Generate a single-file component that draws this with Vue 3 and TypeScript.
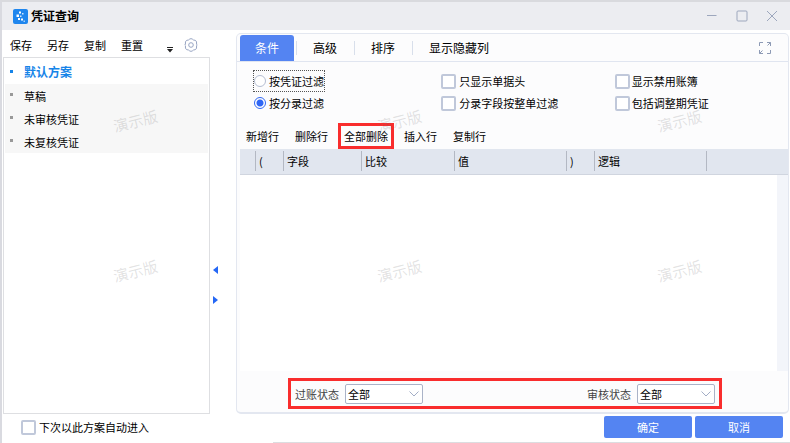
<script setup lang="ts">
import { ref } from 'vue'

interface Check {
  id: string
  label: string
}

const tools: string[] = ['保存', '另存', '复制', '重置']
const schemes: string[] = ['默认方案', '草稿', '未审核凭证', '未复核凭证']
const tabs: string[] = ['条件', '高级', '排序', '显示隐藏列']
const actions: string[] = ['新增行', '删除行', '全部删除', '插入行', '复制行']
const columns: string[] = ['', '(', '字段', '比较', '值', ')', '逻辑', '']
const modes: Check[] = [
  { id: 'voucher', label: '按凭证过滤' },
  { id: 'entry', label: '按分录过滤' },
]
const leftChecks: Check[] = [
  { id: 'headOnly', label: '只显示单据头' },
  { id: 'wholeDoc', label: '分录字段按整单过滤' },
]
const rightChecks: Check[] = [
  { id: 'disabledBook', label: '显示禁用账簿' },
  { id: 'adjustPeriod', label: '包括调整期凭证' },
]

const activeScheme = ref(0)
const activeTab = ref(0)
const mode = ref('entry')
const checked = ref<string[]>([])
const autoEnter = ref(false)
const postState = ref('全部')
const auditState = ref('全部')
</script>

<template>
  <div class="window">
    <header class="titlebar">
      <svg class="logo" viewBox="0 0 15 15" aria-hidden="true">
        <rect width="15" height="15" rx="2" fill="#1f86ee" />
        <g fill="#fff">
          <rect x="6" y="2.500" width="2" height="2" />
          <rect x="9" y="4" width="1.500" height="1.500" opacity=".8" />
          <rect x="3.500" y="5.500" width="2.500" height="2.500" />
          <rect x="7" y="6.500" width="1.500" height="1.500" opacity=".8" />
          <rect x="5" y="9" width="2" height="2" />
          <rect x="8" y="9.500" width="2" height="2" />
          <rect x="10.500" y="11.500" width="1.500" height="1.500" opacity=".6" />
        </g>
      </svg>
      <h1>凭证查询</h1>
      <div class="controls">
        <button type="button" aria-label="最小化">
          <svg viewBox="0 0 12 12"><path d="M1 5.500h9.500" /></svg>
        </button>
        <button type="button" aria-label="最大化">
          <svg viewBox="0 0 12 12"><rect x="1" y="1" width="10" height="10" rx="1" /></svg>
        </button>
        <button type="button" aria-label="关闭">
          <svg viewBox="0 0 12 12"><path d="M1 1l10 10M11 1L1 11" /></svg>
        </button>
      </div>
    </header>

    <main class="content">
      <aside class="side">
        <div class="toolbar">
          <button v-for="t in tools" :key="t" type="button">{{ t }}</button>
          <button type="button" class="more" aria-label="更多">
            <svg viewBox="0 0 6 6"><path d="M0 0h6v1H0zM0 2h6L3 5.500z" fill="#222" /></svg>
          </button>
          <button type="button" class="gear" aria-label="设置">
            <svg viewBox="0 0 14 14" fill="none" stroke="#98a5c3">
              <path d="M5.300 1.300Q7-.1 8.700 1.300L9.500 2 11.100 2.300Q12.900 3 12.600 5L12.500 6.200 13.300 7 12.500 7.800 12.600 9Q12.900 11 11.100 11.700L9.500 12 8.700 12.700Q7 14.100 5.300 12.700L4.500 12 2.900 11.700Q1.100 11 1.400 9L1.500 7.800 .7 7 1.500 6.200 1.400 5Q1.100 3 2.900 2.300L4.500 2z" />
              <circle cx="7" cy="7" r="2.300" />
            </svg>
          </button>
        </div>
        <ul class="schemes">
          <li v-for="(s, i) in schemes" :key="s">
            <button type="button" :class="{ active: i === activeScheme }" @click="activeScheme = i">{{ s }}</button>
          </li>
        </ul>
      </aside>

      <div class="splitter">
        <button type="button" aria-label="收起"><svg viewBox="0 0 5 8"><path d="M5 0v8L0 4z" /></svg></button>
        <button type="button" aria-label="展开"><svg viewBox="0 0 5 8"><path d="M0 0v8l5-4z" /></svg></button>
      </div>

      <section class="panel">
        <nav class="tabs">
          <button
            v-for="(t, i) in tabs"
            :key="t"
            type="button"
            :class="{ active: i === activeTab }"
            @click="activeTab = i"
          >
            {{ t }}
          </button>
          <button type="button" class="expand" aria-label="全屏">
            <svg viewBox="0 0 12 12" fill="none" stroke="#8d9ab5">
              <path d="M.5 4V.5H4M8 .5h3.500V4M11.500 8v3.500H8M4 11.500H.5V8M8.500 3.500l3-3M.5 11.500l3-3" />
            </svg>
          </button>
        </nav>

        <div class="options">
          <div class="group">
            <label v-for="m in modes" :key="m.id" :class="{ focused: m.id === 'voucher' }">
              <input v-model="mode" type="radio" name="mode" :value="m.id" />{{ m.label }}
            </label>
          </div>
          <div class="group">
            <label v-for="c in leftChecks" :key="c.id">
              <input v-model="checked" type="checkbox" :value="c.id" />{{ c.label }}
            </label>
          </div>
          <div class="group">
            <label v-for="c in rightChecks" :key="c.id">
              <input v-model="checked" type="checkbox" :value="c.id" />{{ c.label }}
            </label>
          </div>
        </div>

        <div class="actions">
          <button v-for="a in actions" :key="a" type="button" :class="{ marked: a === '全部删除' }">{{ a }}</button>
        </div>

        <div class="grid">
          <table>
            <colgroup>
              <col class="c-tick" /><col class="c-paren" /><col class="c-field" /><col class="c-compare" />
              <col class="c-value" /><col class="c-paren" /><col class="c-value" /><col />
            </colgroup>
            <thead>
              <tr>
                <th v-for="(c, i) in columns" :key="i" scope="col"><span>{{ c }}</span></th>
              </tr>
            </thead>
          </table>
          <div class="track"></div>
        </div>

        <div class="states">
          <div class="frame">
            <div class="field">
              <label for="post">过账状态</label>
              <div class="select">
                <select id="post" v-model="postState"><option>全部</option></select>
                <svg viewBox="0 0 10 6"><path d="M.5.5L5 5 9.500.5" /></svg>
              </div>
            </div>
            <div class="field">
              <label for="audit">审核状态</label>
              <div class="select">
                <select id="audit" v-model="auditState"><option>全部</option></select>
                <svg viewBox="0 0 10 6"><path d="M.5.5L5 5 9.500.5" /></svg>
              </div>
            </div>
          </div>
        </div>
      </section>
    </main>

    <footer class="footer">
      <label><input v-model="autoEnter" type="checkbox" />下次以此方案自动进入</label>
      <div class="buttons">
        <button type="button">确定</button>
        <button type="button">取消</button>
      </div>
    </footer>

    <div class="watermarks" aria-hidden="true">
      <span v-for="n in 6" :key="n">演示版</span>
    </div>
  </div>
</template>

<style>
body {
  margin: 0;
  background: #fff;
}
</style>

<style scoped>
* {
  box-sizing: border-box;
}
.window {
  position: relative;
  display: flex;
  flex-direction: column;
  min-height: 100vh;
  border-top: 2px solid #d9dade;
  border-left: 2px solid #d9dae0;
  font: 11px/16px "Noto Sans CJK SC", sans-serif;
  color: #000;
}
button {
  padding: 0;
  border: 0;
  background: none;
  font: inherit;
  color: inherit;
  white-space: nowrap;
}
svg {
  display: block;
}
input {
  appearance: none;
  flex: none;
  width: 15px;
  height: 15px;
  margin: 0;
  border: 2px solid #c0c8da;
  border-radius: 2px;
  background: #fff;
}
input[type="checkbox"]:checked {
  background: #4f7ff0;
}
input[type="radio"] {
  width: 12px;
  height: 12px;
  border: 1px solid #b4bdd2;
  border-radius: 50%;
}
input[type="radio"]:checked {
  border-color: #2f66f5;
  background: radial-gradient(circle, #2f66f5 3px, #fff 4px);
}

.titlebar {
  display: flex;
  align-items: center;
  height: 28px;
  padding: 0 12px 0 11px;
  background: #ecedf1;
}
.logo {
  width: 15px;
  height: 15px;
}
h1 {
  margin: 0 auto 0 3px;
  font-size: 12px;
  line-height: 16px;
}
.controls {
  display: flex;
  gap: 18px;
}
.controls svg {
  width: 12px;
  height: 12px;
  fill: none;
  stroke: #9da7bd;
}

.content {
  flex: 1;
  display: flex;
}
.side {
  flex: 0 0 27%;
  max-width: 208px;
  display: flex;
  flex-direction: column;
}
.toolbar {
  display: flex;
  align-items: center;
  gap: 15px;
  height: 27px;
  padding: 2px 12px 0 8px;
}
.toolbar .more {
  margin: 10px -4px 0 auto;
}
.more svg {
  width: 6px;
  height: 6px;
}
.gear svg {
  width: 14px;
  height: 14px;
}
.schemes {
  flex: 1;
  margin: 0 0 0 1px;
  padding: 2px 1px;
  border: 1px solid #dedfe2;
  list-style: none;
}
.schemes button {
  display: flex;
  align-items: center;
  width: 100%;
  height: 24px;
  padding-left: 5px;
  background: #f7f7f7;
}
.schemes li + li button {
  height: 23px;
}
.schemes button::before {
  content: "";
  width: 3px;
  height: 3px;
  margin: 0 11px 2px 0;
  background: #999;
}
.schemes button.active {
  background: #fff;
  color: #1684e8;
  font-size: 12px;
  font-weight: 700;
}
.schemes button.active::before {
  background: #1684e8;
}

.splitter {
  flex: 0 0 26px;
  display: flex;
  flex-direction: column;
  align-items: flex-start;
  justify-content: center;
  gap: 22px;
  padding: 126px 0 0 3px;
}
.splitter svg {
  width: 5px;
  height: 8px;
  fill: #2467f5;
}

.panel {
  flex: 1;
  min-width: 0;
  display: flex;
  flex-direction: column;
  margin: 3px 1px 0 0;
  border: 1px solid #e3e7f0;
  border-bottom-width: 2px;
  border-radius: 5px;
  background: #fcfcfd;
}
.tabs {
  display: flex;
  align-items: flex-end;
  height: 28px;
  padding-left: 3px;
  border-bottom: 1px solid #e0e5f0;
}
.tabs button {
  position: relative;
  height: 26px;
  padding: 0 17px;
  font-size: 12px;
}
.tabs button.active {
  margin-right: 2px;
  padding: 0 15px;
  border-radius: 3px 3px 0 0;
  background: #5484f2;
  color: #fff;
}
.tabs button:nth-child(2),
.tabs button:nth-child(3),
.tabs button:nth-child(4) {
  background: linear-gradient(#d8dfeb, #d8dfeb) left center / 1px 14px no-repeat;
}
.tabs .expand {
  align-self: center;
  height: 12px;
  margin-left: auto;
}
.expand svg {
  width: 12px;
  height: 12px;
}

.options {
  display: grid;
  grid-template-columns: 187fr 173fr 173fr;
  padding: 9px 0 8px 17px;
}
.group {
  display: flex;
  flex-direction: column;
  align-items: flex-start;
  gap: 2px;
}
.group label,
.footer label {
  display: flex;
  align-items: center;
  gap: 3px;
  height: 20px;
  white-space: nowrap;
}
.group .focused {
  outline: 1px dotted #555;
}
.group:last-child label {
  gap: 2px;
}

.actions {
  display: flex;
  gap: 4px;
  padding: 2px 0 0 3px;
}
.actions button {
  height: 26px;
  padding: 0 3px;
  border: 3px solid transparent;
}
.actions .marked {
  border-color: #f92d2d;
}

.grid {
  flex: 1;
  display: flex;
  flex-direction: column;
  margin-left: 3px;
  background: #fff;
}
table {
  width: 100%;
  table-layout: fixed;
  border-collapse: collapse;
}
th {
  height: 25px;
  padding: 0;
  border-bottom: 1px solid #d0d5df;
  background: #e1e6ef;
  font-weight: 400;
  text-align: left;
}
th span {
  display: block;
  height: 20px;
  padding-left: 3px;
  line-height: 20px;
}
th + th span {
  border-left: 1px solid #b3b8c3;
}
.c-tick { width: 15px; }
.c-paren { width: 28px; }
.c-field { width: 78px; }
.c-compare { width: 93px; }
.c-value { width: 112px; }
.track {
  flex: 1;
  align-self: flex-end;
  width: 11px;
  background: #f3f5fa;
}

.states {
  padding: 7px 66px 3px 51px;
}
.frame {
  display: flex;
  justify-content: space-between;
  padding: 1px 4px;
  border: 3px solid #f92d2d;
}
.field {
  display: flex;
  align-items: center;
  gap: 6px;
  height: 23px;
  color: #444;
}
.select {
  position: relative;
  width: 78px;
}
select {
  display: block;
  appearance: none;
  width: 100%;
  height: 20px;
  padding: 0 2px;
  border: 1px solid #aab3c8;
  border-radius: 2px;
  background: #fff;
  font: inherit;
  color: #000;
}
.select svg {
  position: absolute;
  top: 7px;
  right: 4px;
  width: 10px;
  height: 6px;
  fill: none;
  stroke: #a3aec6;
  pointer-events: none;
}

.footer {
  display: flex;
  align-items: center;
  justify-content: space-between;
  height: 29px;
  padding: 0 7px 3px 19px;
  background: linear-gradient(#dcdde0, #dcdde0) 271px bottom / 100% 1px no-repeat;
}
.buttons {
  display: flex;
  gap: 3px;
}
.buttons button {
  width: 88px;
  height: 22px;
  border-radius: 2px;
  background: #5484f2;
  color: #fff;
}

/* Demo-edition stamps laid over the whole dialog */
.watermarks {
  position: absolute;
  inset: 44px 0 97px 0;
  display: grid;
  grid-template-columns: 34% 33% 38%;
  pointer-events: none;
}
.watermarks span {
  justify-self: center;
  align-self: center;
  color: rgba(110, 110, 110, 0.2);
  font-size: 15px;
  line-height: 20px;
  transform: rotate(-14deg);
}
</style>
